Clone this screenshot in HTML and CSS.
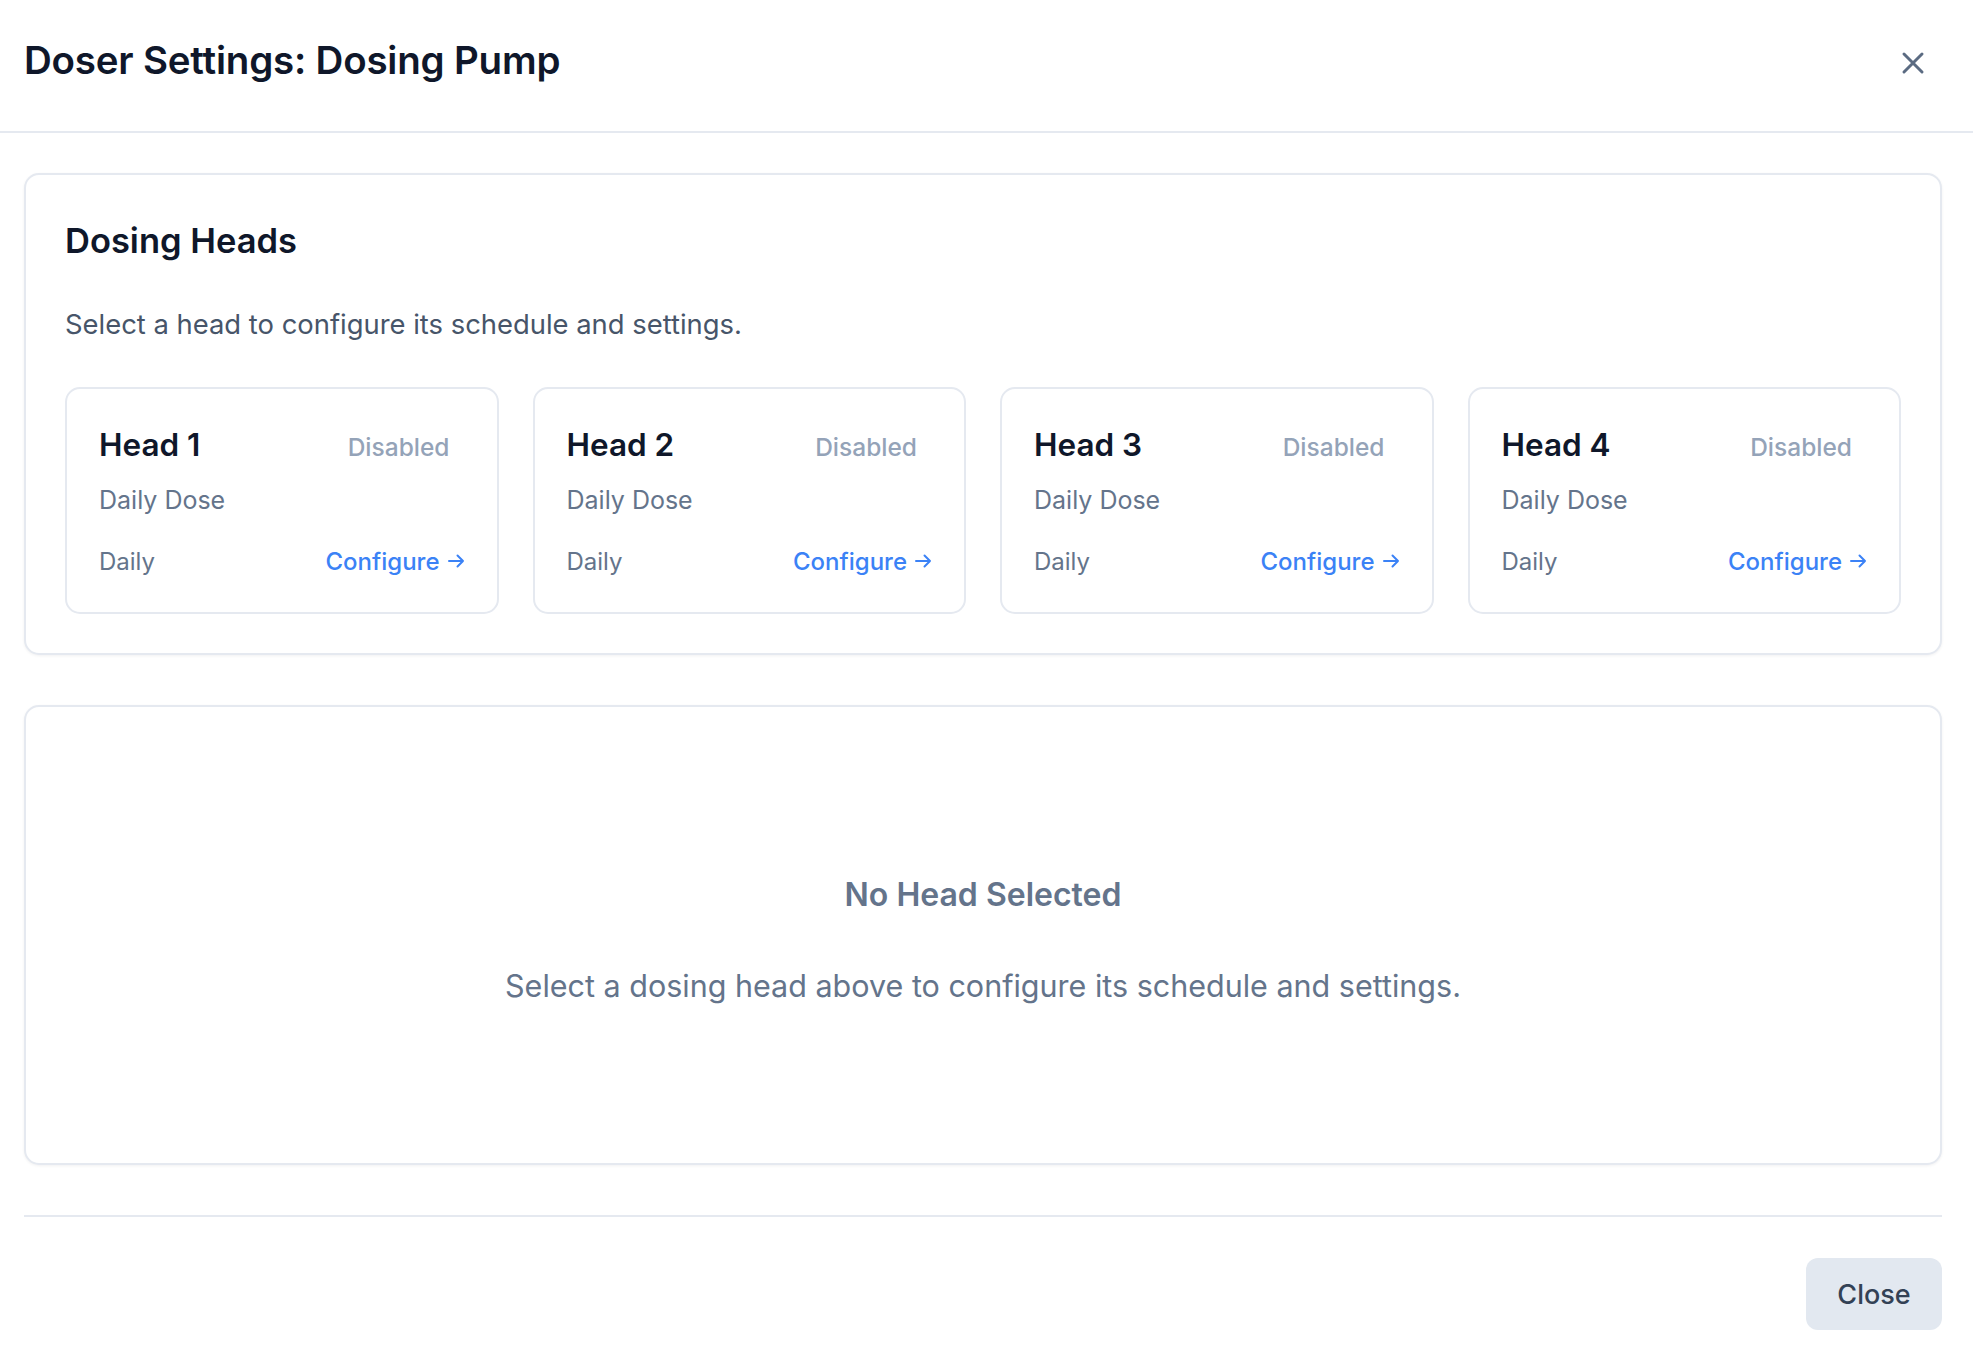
FILE: index.html
```html
<!DOCTYPE html>
<html lang="en">
<head>
<meta charset="utf-8">
<title>Doser Settings</title>
<link rel="stylesheet" href="styles.css">
</head>
<body>
<div class="modal">
  <header class="modal-header">
    <h1 class="modal-title">Doser Settings: Dosing Pump</h1>
    <button class="icon-btn" aria-label="Close">
      <svg width="24" height="24" viewBox="0 0 24 24" fill="none" stroke="currentColor" stroke-width="3" stroke-linecap="round"><path d="M3 3L21 21M21 3L3 21"/></svg>
    </button>
  </header>
  <main class="modal-body">
    <section class="panel heads-panel">
      <h2 class="panel-title">Dosing Heads</h2>
      <p class="panel-desc">Select a head to configure its schedule and settings.</p>
      <div class="head-grid">
        <div class="head-card">
          <div class="head-top"><span class="head-name">Head 1</span><span class="badge">Disabled</span></div>
          <div class="head-type">Daily Dose</div>
          <div class="head-bottom"><span class="head-freq">Daily</span><a class="configure" href="#">Configure <svg class="arrow" width="18" height="18" viewBox="0 0 18 18" fill="none" stroke="currentColor" stroke-width="2" stroke-linecap="round" stroke-linejoin="round"><path d="M2 9H16M10.5 3.5L16 9L10.5 14.5"/></svg></a></div>
        </div>
        <div class="head-card">
          <div class="head-top"><span class="head-name">Head 2</span><span class="badge">Disabled</span></div>
          <div class="head-type">Daily Dose</div>
          <div class="head-bottom"><span class="head-freq">Daily</span><a class="configure" href="#">Configure <svg class="arrow" width="18" height="18" viewBox="0 0 18 18" fill="none" stroke="currentColor" stroke-width="2" stroke-linecap="round" stroke-linejoin="round"><path d="M2 9H16M10.5 3.5L16 9L10.5 14.5"/></svg></a></div>
        </div>
        <div class="head-card">
          <div class="head-top"><span class="head-name">Head 3</span><span class="badge">Disabled</span></div>
          <div class="head-type">Daily Dose</div>
          <div class="head-bottom"><span class="head-freq">Daily</span><a class="configure" href="#">Configure <svg class="arrow" width="18" height="18" viewBox="0 0 18 18" fill="none" stroke="currentColor" stroke-width="2" stroke-linecap="round" stroke-linejoin="round"><path d="M2 9H16M10.5 3.5L16 9L10.5 14.5"/></svg></a></div>
        </div>
        <div class="head-card">
          <div class="head-top"><span class="head-name">Head 4</span><span class="badge">Disabled</span></div>
          <div class="head-type">Daily Dose</div>
          <div class="head-bottom"><span class="head-freq">Daily</span><a class="configure" href="#">Configure <svg class="arrow" width="18" height="18" viewBox="0 0 18 18" fill="none" stroke="currentColor" stroke-width="2" stroke-linecap="round" stroke-linejoin="round"><path d="M2 9H16M10.5 3.5L16 9L10.5 14.5"/></svg></a></div>
        </div>
      </div>
    </section>
    <section class="panel empty-panel">
      <h3 class="empty-title">No Head Selected</h3>
      <p class="empty-desc">Select a dosing head above to configure its schedule and settings.</p>
    </section>
  </main>
  <footer class="modal-footer">
    <button class="btn-close">Close</button>
  </footer>
</div>
</body>
</html>
```
FILE: styles.css
```css
* { box-sizing: border-box; }
html, body { margin: 0; padding: 0; background: #ffffff; }
body {
  font-family: Inter, "Noto Sans", "Liberation Sans", sans-serif;
  color: #0f172a;
  width: 1973px;
  height: 1354px;
  overflow: hidden;
}
.modal { display: flex; flex-direction: column; }
.modal-header {
  height: 133px;
  border-bottom: 2px solid #e5e9f0;
  display: flex;
  align-items: flex-start;
  justify-content: space-between;
  padding: 37px 48px 0 24px;
}
.modal-title {
  margin: 0;
  font-size: 38.5px;
  line-height: 46px;
  font-weight: 600;
  color: #0f172a;
  letter-spacing: -0.2px;
}
.icon-btn {
  border: 0;
  background: transparent;
  padding: 0;
  margin-top: 14px;
  width: 24px;
  height: 24px;
  color: #5b6b82;
  display: flex;
}
.modal-body {
  padding: 40px 31px 0 24px;
  display: flex;
  flex-direction: column;
  gap: 50px;
}
.panel {
  border: 2px solid #e5e9f0;
  border-radius: 15px;
  background: #fff;
  box-shadow: 0 1px 3px rgba(15, 23, 42, 0.06);
}
.heads-panel { padding: 39px; height: 482px; }
.panel-title {
  margin: 0;
  font-size: 34.5px;
  line-height: 54px;
  font-weight: 600;
  color: #0f172a;
}
.panel-desc {
  margin: 38px 0 0;
  font-size: 27.4px;
  line-height: 36px;
  color: #475569;
}
.head-grid {
  margin-top: 45px;
  display: grid;
  grid-template-columns: repeat(4, 1fr);
  gap: 34px;
}
.head-card {
  border: 2px solid #e5e9f0;
  border-radius: 15px;
  padding: 32px;
  height: 227px;
}
.head-top {
  height: 46px;
  display: flex;
  align-items: center;
  justify-content: space-between;
}
.head-name { font-size: 31.5px; font-weight: 600; color: #0f172a; }
.badge {
  font-size: 24.5px;
  font-weight: 500;
  color: #94a3b8;
  padding: 6px 15px 0;
}
.head-type {
  margin-top: 16px;
  height: 34px;
  line-height: 34px;
  font-size: 25px;
  color: #64748b;
}
.head-bottom {
  margin-top: 27px;
  height: 34px;
  display: flex;
  align-items: center;
  justify-content: space-between;
  font-size: 24px;
}
.head-freq { color: #64748b; }
.configure {
  color: #3b82f6;
  text-decoration: none;
  font-weight: 500;
  font-size: 24px;
  display: flex;
  align-items: center;
  gap: 7px;
}
.empty-panel {
  height: 460px;
  padding: 167px 40px 0;
  text-align: center;
}
.empty-title {
  margin: 0;
  font-size: 32px;
  line-height: 42px;
  font-weight: 600;
  color: #64748b;
}
.empty-desc {
  margin: 50px 0 0;
  font-size: 30.5px;
  line-height: 40px;
  color: #64748b;
}
.modal-footer {
  margin: 50px 31px 0 24px;
  border-top: 2px solid #e5e9f0;
  padding-top: 41px;
  display: flex;
  justify-content: flex-end;
}
.btn-close {
  width: 136px;
  height: 72px;
  border: 0;
  border-radius: 12px;
  background: #e2e8f0;
  color: #334155;
  font-family: inherit;
  font-size: 27px;
  font-weight: 500;
}
```
